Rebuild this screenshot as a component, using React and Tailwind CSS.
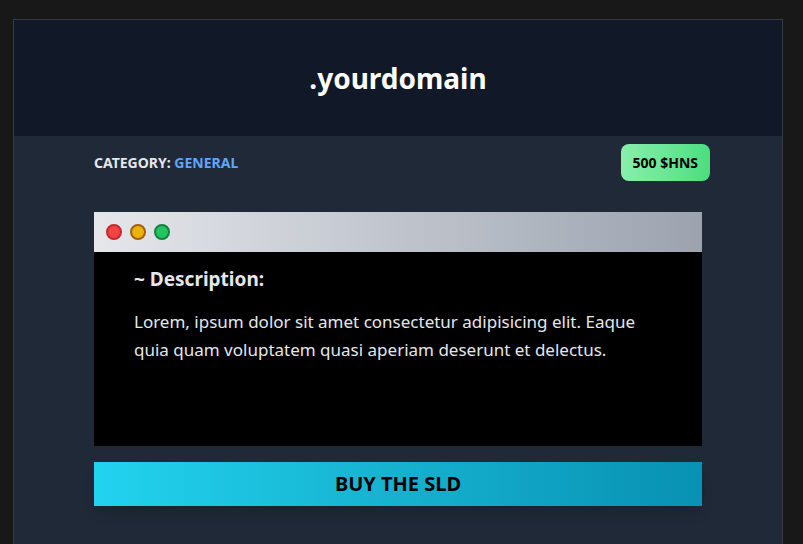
const dots = [
  'bg-[#ef4444] border-[#c8262b]',
  'bg-[#eab308] border-[#a35f0b]',
  'bg-[#22c55e] border-[#15803d]',
]

export default function App() {
  return (
    <div className="min-h-screen bg-[#181818] pl-[13px] pt-[19px]" style={{ fontFamily: '"Noto Sans", sans-serif' }}>
      <div className="w-[770px] border border-[#343a46] bg-[#1f2937] pb-12">
        <header className="flex h-[116px] items-center justify-center bg-[#111827]">
          <h1 className="text-[28px] font-bold text-white">.yourdomain</h1>
        </header>

        <div className="px-[80px]">
          <div className="flex items-center justify-between pt-2">
            <p className="text-[14px] font-bold uppercase text-[#e5e7eb]">
              Category: <span className="text-[#60a5fa]">General</span>
            </p>
            <span className="mr-[-8px] rounded-lg bg-gradient-to-r from-[#86efac] to-[#4ade80] px-3 py-2 text-[14px] font-bold text-black">
              500 $HNS
            </span>
          </div>

          <div className="mt-[31px]">
            <div className="flex h-10 items-center gap-2 bg-gradient-to-r from-[#e5e7eb] to-[#9ca3af] px-3">
              {dots.map((c) => (
                <span key={c} className={`h-4 w-4 rounded-full border-2 ${c}`} />
              ))}
            </div>
            <div className="h-[194px] bg-black px-10 pt-[13px]">
              <h2 className="text-[19px] font-bold text-[#e5e7eb]">~ Description:</h2>
              <p className="mt-[14px] text-[17px] leading-7 text-[#e5e7eb]">
                Lorem, ipsum dolor sit amet consectetur adipisicing elit. Eaque quia quam voluptatem quasi aperiam deserunt et delectus.
              </p>
            </div>
          </div>

          <button className="mt-4 flex h-11 w-full items-center justify-center bg-gradient-to-r from-[#22d3ee] to-[#0891b2] text-[20px] font-bold text-black shadow-lg">
            BUY THE SLD
          </button>
        </div>
      </div>
    </div>
  )
}
